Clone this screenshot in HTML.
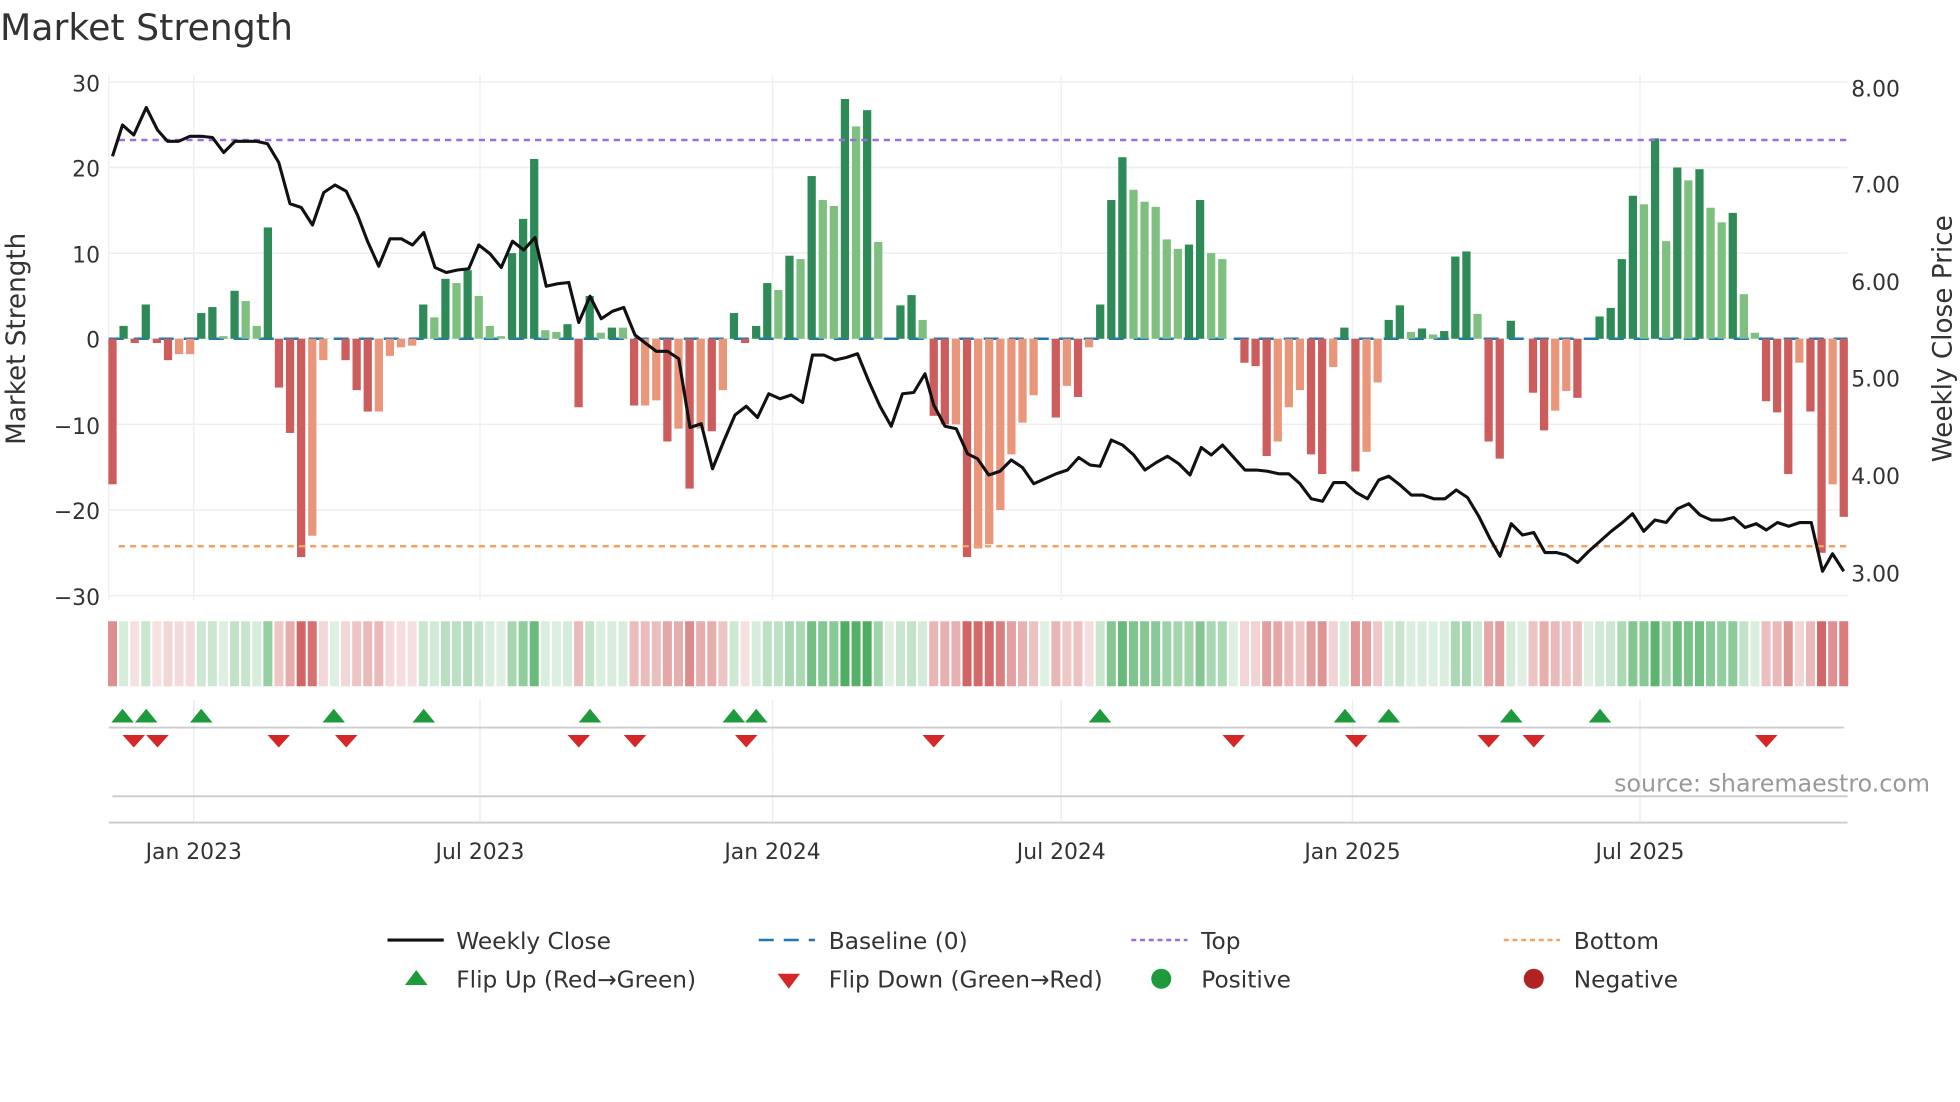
<!DOCTYPE html>
<html><head><meta charset="utf-8"><style>
html,body{margin:0;padding:0;background:#fff;}
svg{display:block;font-family:"DejaVu Sans","Liberation Sans",sans-serif;}
</style></head><body>
<svg id="s" width="1960" height="1102" viewBox="0 0 1568 881.6" xmlns="http://www.w3.org/2000/svg">
<rect width="1568" height="882" fill="#fff"/>
<text x="0" y="32" font-size="29" fill="#333">Market Strength</text>
<g id="grid"></g>
<g id="bars"></g>
<g id="heat"></g>
<g id="flips"></g>
<line x1="95" y1="112" x2="1478" y2="112" stroke="#9b6ee0" stroke-width="2" stroke-dasharray="5,4"/>
<line x1="95" y1="437" x2="1478" y2="437" stroke="#f4a261" stroke-width="2" stroke-dasharray="5,4"/>
<polyline id="line" fill="none" stroke="#111" stroke-width="2.5" stroke-linejoin="round"/>
<g font-size="17.5" fill="#333">
<text x="80" y="73" text-anchor="end">30</text>
<text x="80" y="141" text-anchor="end">20</text>
<text x="80" y="210" text-anchor="end">10</text>
<text x="80" y="278" text-anchor="end">0</text>
<text x="80" y="347" text-anchor="end">−10</text>
<text x="80" y="415" text-anchor="end">−20</text>
<text x="80" y="484" text-anchor="end">−30</text>
<text x="1481" y="77">8.00</text>
<text x="1481" y="154">7.00</text>
<text x="1481" y="232">6.00</text>
<text x="1481" y="309">5.00</text>
<text x="1481" y="387">4.00</text>
<text x="1481" y="465">3.00</text>
<text x="155" y="687" text-anchor="middle">Jan 2023</text>
<text x="384" y="687" text-anchor="middle">Jul 2023</text>
<text x="618" y="687" text-anchor="middle">Jan 2024</text>
<text x="849" y="687" text-anchor="middle">Jul 2024</text>
<text x="1082" y="687" text-anchor="middle">Jan 2025</text>
<text x="1312" y="687" text-anchor="middle">Jul 2025</text>
</g>
<text transform="translate(20,271) rotate(-90)" font-size="21" fill="#333" text-anchor="middle">Market Strength</text>
<text transform="translate(1561,271) rotate(-90)" font-size="21" fill="#333" text-anchor="middle">Weekly Close Price</text>
<text x="1544" y="633" font-size="19" fill="#999" text-anchor="end">source: sharemaestro.com</text>
<line x1="90" y1="637" x2="1478" y2="637" stroke="#ccc" stroke-width="1.5"/>
<line x1="87" y1="658" x2="1478" y2="658" stroke="#ccc" stroke-width="1.5"/>
<line x1="87" y1="582" x2="1475" y2="582" stroke="#ccc" stroke-width="1.5"/>
<g font-size="18.6" fill="#333">
<line x1="310" y1="752" x2="355" y2="752" stroke="#111" stroke-width="2.5"/>
<text x="365" y="759">Weekly Close</text>
<line x1="607" y1="752" x2="652" y2="752" stroke="#1f77b4" stroke-width="2" stroke-dasharray="12,8"/>
<text x="663" y="759">Baseline (0)</text>
<line x1="905" y1="752" x2="950" y2="752" stroke="#9b6ee0" stroke-width="2" stroke-dasharray="4,3"/>
<text x="961" y="759">Top</text>
<line x1="1203" y1="752" x2="1248" y2="752" stroke="#f4a261" stroke-width="2" stroke-dasharray="4,3"/>
<text x="1259" y="759">Bottom</text>
<polygon points="324,788 342,788 333,776" fill="#1e9a3c"/>
<text x="365" y="790">Flip Up (Red→Green)</text>
<polygon points="622,779 640,779 631,791" fill="#d62728"/>
<text x="663" y="790">Flip Down (Green→Red)</text>
<circle cx="929" cy="783" r="8" fill="#1e9a3c"/>
<text x="961" y="790">Positive</text>
<circle cx="1227" cy="783" r="8" fill="#b22222"/>
<text x="1259" y="790">Negative</text>
</g>
</svg>
<script>
var NS="http://www.w3.org/2000/svg";
function el(p,t,a){var e=document.createElementNS(NS,t);for(var k in a)e.setAttribute(k,a[k]);document.getElementById(p).appendChild(e);return e;}
var ticks=[155,384,618,849,1082,1312];
for(var v=-30;v<=30;v+=10){var y=271-v*6.85;el("grid","line",{x1:87,x2:1478,y1:y,y2:y,stroke:"#eee","stroke-width":1.2});}
ticks.forEach(function(x){el("grid","line",{x1:x,x2:x,y1:60,y2:480,stroke:"#f0f0f0","stroke-width":1.2});el("grid","line",{x1:x,x2:x,y1:560,y2:658,stroke:"#eee","stroke-width":1.2});});
el("grid","line",{x1:87,x2:87,y1:60,y2:480,stroke:"#eee"});
el("grid","line",{x1:87,x2:1478,y1:271,y2:271,stroke:"#1f77b4","stroke-width":2,"stroke-dasharray":"12,8"});
var d=[-17,1.5,-0.5,4,-0.5,-2.5,-1.8,-1.8,3,3.7,0.3,5.6,4.4,1.5,13,-5.7,-11,-25.5,-23,-2.5,0,-2.5,-6,-8.5,-8.5,-2,-1,-0.8,4,2.5,7,6.5,8,5,1.5,0.3,10,14,21,1,0.8,1.7,-8,5,0.7,1.3,1.3,-7.8,-7.8,-7.2,-12,-10.5,-17.5,-10.5,-10.8,-6,3,-0.5,1.5,6.5,5.7,9.7,9.3,19,16.2,15.5,28,24.8,26.7,11.3,0,3.9,5.1,2.2,-9,-10,-10,-25.5,-24.5,-24,-20,-13.5,-9.8,-6.6,0,-9.2,-5.5,-6.8,-1,4,16.2,21.2,17.4,16,15.4,11.6,10.5,11,16.2,10,9.3,0,-2.8,-3.2,-13.7,-12,-8,-6,-13.5,-15.8,-3.3,1.3,-15.5,-13.2,-5.1,2.2,3.9,0.8,1.2,0.5,0.9,9.6,10.2,2.9,-12,-14,2.1,0,-6.3,-10.7,-8.4,-6.1,-6.9,0,2.6,3.6,9.3,16.7,15.7,23.4,11.4,20,18.5,19.8,15.3,13.6,14.7,5.2,0.7,-7.3,-8.6,-15.8,-2.8,-8.5,-25,-17,-20.8];
var n=d.length,x0=90,x1=1475,st=(x1-x0)/(n-1),w=6.6;
for(var i=0;i<n;i++){var v=d[i],p=i?d[i-1]:0,x=x0+i*st;
 var c;if(v>=0)c=(v>p)?"#2e8b57":"#7fbf7f";else c=(v<p)?"#cd5c5c":"#e9967a";
 if(v!==0){var h=Math.abs(v)*6.85;el("bars","rect",{x:x-w/2,y:v>0?271-h:271,width:w,height:h,fill:c});}
 var a=Math.min(1,0.18+Math.abs(v)/26*0.82);
 el("heat","rect",{x:x-3.6,y:497,width:7.2,height:52,fill:v>=0?"rgb(46,160,70)":"rgb(200,70,70)","fill-opacity":a*0.85});
}
var L=[90,125,98,100,107,108,117,86,126,104,134,113,143,113,152,109,161,109,170,110,179,122,188,113,196,113,205,113,214,115,223,130,232,163,241,166,250,180,259,154,268,148,277,153,286,172,294,193,303,213,312,191,321,191,330,196,339,186,348,214,357,218,366,216,375,215,383,196,392,203,401,214,410,193,419,200,428,190,437,229,446,227,455,226,463,258,472,237,481,255,490,249,499,246,508,268,517,275,525,281,534,281,543,287,552,342,561,339,570,375,579,353,588,332,597,325,606,334,615,315,624,319,633,316,642,322,650,284,659,284,668,288,677,286,686,283,695,305,704,325,713,341,722,315,731,314,740,299,747,324,756,341,765,343,774,363,782,367,791,380,800,377,809,368,818,374,827,387,836,383,845,379,854,376,863,366,872,372,880,373,889,352,898,356,907,364,916,376,925,370,934,365,943,371,952,380,961,358,969,364,978,356,987,366,996,376,1005,376,1014,377,1023,379,1031,379,1040,387,1049,399,1058,401,1067,386,1076,386,1085,394,1094,399,1103,384,1111,381,1120,388,1129,396,1138,396,1147,399,1156,399,1165,392,1174,398,1183,413,1192,431,1200,445,1209,419,1218,428,1227,426,1236,442,1245,442,1253,444,1262,450,1271,441,1280,433,1289,425,1298,418,1306,411,1315,425,1324,416,1333,418,1342,407,1351,403,1360,412,1369,416,1378,416,1387,414,1396,422,1405,419,1413,424,1422,418,1431,421,1440,418,1449,418,1458,457,1466,443,1475,457];
var pts=[];for(var i=0;i<L.length;i+=2)pts.push(L[i]+","+L[i+1]);
document.getElementById("line").setAttribute("points",pts.join(" "));
[98,117,161,267,339,472,587,605,880,1076,1111,1209,1280].forEach(function(x){el("flips","polygon",{points:(x-9)+",578 "+(x+9)+",578 "+x+",567",fill:"#1e9a3c"});});
[107,126,223,277,463,508,597,747,987,1085,1191,1227,1413].forEach(function(x){el("flips","polygon",{points:(x-9)+",588 "+(x+9)+",588 "+x+",598",fill:"#d62728"});});
</script>
</body></html>
